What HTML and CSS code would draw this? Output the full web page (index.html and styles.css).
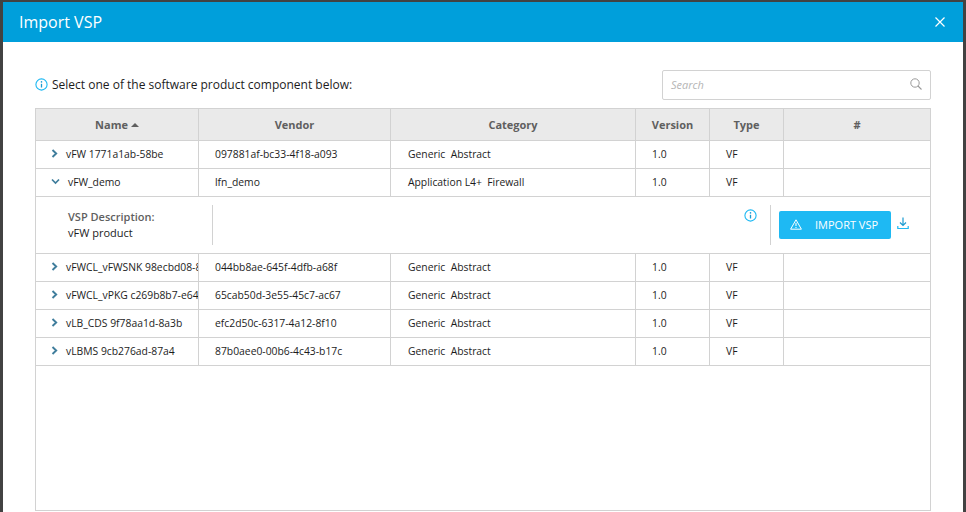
FILE: index.html
```html
<!DOCTYPE html>
<html lang="en">
<head>
    <meta charset="UTF-8">
    <title>Import VSP</title>
    <link rel="stylesheet" href="styles.css">
</head>
<body>
  <div class="modal">
    <div class="modal-header">
      <span class="modal-title">Import VSP</span>
      <svg class="close-icon" width="10" height="10" viewBox="0 0 10 10"><path d="M0.5 0.5L9.5 9.5M9.5 0.5L0.5 9.5" stroke="#fff" stroke-width="1.2" fill="none"/></svg>
    </div>
    <div class="modal-body">
      <div class="toolbar">
        <div class="hint">
          <svg width="13" height="13" viewBox="0 0 13 13"><circle cx="6.5" cy="6.5" r="5.6" stroke="#1eb9f3" stroke-width="1.1" fill="none"/><path d="M6.5 5.8V9.5" stroke="#1b9bd1" stroke-width="1.3"/><circle cx="6.5" cy="3.9" r="0.8" fill="#1b9bd1"/></svg>
          <span>Select one of the software product component below:</span>
        </div>
        <div class="search">
          <span class="search-text">Search</span>
          <svg width="12" height="12" viewBox="0 0 12 12"><circle cx="5" cy="5" r="4.2" stroke="#9a9a9a" stroke-width="1" fill="none"/><path d="M8 8L11.5 11.5" stroke="#9a9a9a" stroke-width="1.1"/></svg>
        </div>
      </div>

      <div class="grid">
        <div class="row head">
          <div class="cell">Name <span class="sort"></span></div>
          <div class="cell">Vendor</div>
          <div class="cell">Category</div>
          <div class="cell">Version</div>
          <div class="cell">Type</div>
          <div class="cell">#</div>
        </div>

        <div class="row">
          <div class="cell name"><svg class="chev" width="7" height="9" viewBox="0 0 7 9"><path d="M1.5 1L5.2 4.5L1.5 8" stroke="#3f7d9c" stroke-width="1.9" fill="none"/></svg><span>vFW 1771a1ab-58be</span></div>
          <div class="cell">097881af-bc33-4f18-a093</div>
          <div class="cell cat">Generic&nbsp; Abstract</div>
          <div class="cell">1.0</div>
          <div class="cell">VF</div>
          <div class="cell"></div>
        </div>

        <div class="row">
          <div class="cell name open"><svg class="chev" width="9" height="7" viewBox="0 0 9 7"><path d="M1 1.5L4.5 5L8 1.5" stroke="#3f7d9c" stroke-width="1.7" fill="none"/></svg><span>vFW_demo</span></div>
          <div class="cell">lfn_demo</div>
          <div class="cell cat">Application L4+&nbsp; Firewall</div>
          <div class="cell">1.0</div>
          <div class="cell">VF</div>
          <div class="cell"></div>
        </div>

        <div class="details">
          <div class="desc">
            <div class="desc-label">VSP Description:</div>
            <div class="desc-value">vFW product</div>
          </div>
          <div class="details-info">
            <svg width="13" height="13" viewBox="0 0 13 13"><circle cx="6.5" cy="6.5" r="5.6" stroke="#1eb9f3" stroke-width="1.1" fill="none"/><path d="M6.5 5.8V9.5" stroke="#1b9bd1" stroke-width="1.3"/><circle cx="6.5" cy="3.9" r="0.8" fill="#1b9bd1"/></svg>
          </div>
          <div class="actions">
            <button class="import-btn" type="button">
              <svg width="12" height="11" viewBox="0 0 12 11"><path d="M6 0.8L11.4 10.2H0.6Z" stroke="#fff" stroke-width="1" fill="none" stroke-linejoin="round"/><path d="M6 3.8V7" stroke="#fff" stroke-width="1.1"/><circle cx="6" cy="8.4" r="0.6" fill="#fff"/></svg>
              <span>IMPORT VSP</span>
            </button>
            <svg class="download" width="12" height="13" viewBox="0 0 12 13"><path d="M6 0.5V8M3 5.5L6 8.5L9 5.5" stroke="#1b9bd1" stroke-width="1.2" fill="none"/><path d="M0.8 9V11.5H11.2V9" stroke="#1eb9f3" stroke-width="1.2" fill="none"/></svg>
          </div>
        </div>

        <div class="row">
          <div class="cell name"><svg class="chev" width="7" height="9" viewBox="0 0 7 9"><path d="M1.5 1L5.2 4.5L1.5 8" stroke="#3f7d9c" stroke-width="1.9" fill="none"/></svg><span>vFWCL_vFWSNK 98ecbd08-8a3c</span></div>
          <div class="cell">044bb8ae-645f-4dfb-a68f</div>
          <div class="cell cat">Generic&nbsp; Abstract</div>
          <div class="cell">1.0</div>
          <div class="cell">VF</div>
          <div class="cell"></div>
        </div>

        <div class="row">
          <div class="cell name"><svg class="chev" width="7" height="9" viewBox="0 0 7 9"><path d="M1.5 1L5.2 4.5L1.5 8" stroke="#3f7d9c" stroke-width="1.9" fill="none"/></svg><span>vFWCL_vPKG c269b8b7-e64a</span></div>
          <div class="cell">65cab50d-3e55-45c7-ac67</div>
          <div class="cell cat">Generic&nbsp; Abstract</div>
          <div class="cell">1.0</div>
          <div class="cell">VF</div>
          <div class="cell"></div>
        </div>

        <div class="row">
          <div class="cell name"><svg class="chev" width="7" height="9" viewBox="0 0 7 9"><path d="M1.5 1L5.2 4.5L1.5 8" stroke="#3f7d9c" stroke-width="1.9" fill="none"/></svg><span>vLB_CDS 9f78aa1d-8a3b</span></div>
          <div class="cell">efc2d50c-6317-4a12-8f10</div>
          <div class="cell cat">Generic&nbsp; Abstract</div>
          <div class="cell">1.0</div>
          <div class="cell">VF</div>
          <div class="cell"></div>
        </div>

        <div class="row">
          <div class="cell name"><svg class="chev" width="7" height="9" viewBox="0 0 7 9"><path d="M1.5 1L5.2 4.5L1.5 8" stroke="#3f7d9c" stroke-width="1.9" fill="none"/></svg><span>vLBMS 9cb276ad-87a4</span></div>
          <div class="cell">87b0aee0-00b6-4c43-b17c</div>
          <div class="cell cat">Generic&nbsp; Abstract</div>
          <div class="cell">1.0</div>
          <div class="cell">VF</div>
          <div class="cell"></div>
        </div>
      </div>
    </div>
  </div>
</body>
</html>
```

FILE: styles.css
```css
* {
  box-sizing: border-box;
}

html, body {
  height: 100%;
}

body {
  margin: 0;
  background: #424242;
  font-family: 'Open Sans', sans-serif;
  color: #1c1c1c;
  overflow: hidden;
}

.modal {
  margin: 2px 3px 0;
  height: 510px;
  background: #fff;
}

.modal-header {
  height: 40px;
  background: #009fdb;
  color: #fff;
  display: flex;
  align-items: center;
  justify-content: space-between;
  padding: 0 18px 0 16px;
}

.modal-title {
  font-size: 16px;
}

.modal-body {
  padding: 28px 32px 0;
}

.toolbar {
  display: flex;
  justify-content: space-between;
  align-items: center;
  height: 30px;
  margin-bottom: 8px;
}

.hint {
  display: flex;
  align-items: center;
  gap: 4px;
  font-size: 12px;
  padding-bottom: 2px;
}

.search {
  width: 269px;
  height: 30px;
  border: 1px solid #d2d2d2;
  border-radius: 2px;
  display: flex;
  align-items: center;
  justify-content: space-between;
  padding: 0 8px 2px 8px;
}

.search-text {
  font-size: 11px;
  font-style: italic;
  color: #b5b5b5;
}

.grid {
  width: 896px;
  height: 403px;
  border: 1px solid #d2d2d2;
}

.row {
  display: grid;
  grid-template-columns: 162px 192px 245px 74px 74px 1fr;
  height: 28px;
  border-bottom: 1px solid #d2d2d2;
  font-size: 10.35px;
}

.cell {
  border-left: 1px solid #d2d2d2;
  padding: 0 0 2px 16px;
  display: flex;
  align-items: center;
  white-space: nowrap;
  overflow: hidden;
}

.cell:first-child {
  border-left: 0;
}

.cat {
  padding-left: 17px;
}

.head {
  height: 32px;
  background: #eaeaea;
  font-size: 11px;
  font-weight: 700;
  color: #5f5f5f;
}

.head .cell {
  justify-content: center;
  padding: 0;
  gap: 3px;
}

.sort {
  width: 0;
  height: 0;
  border-left: 4px solid transparent;
  border-right: 4px solid transparent;
  border-bottom: 4px solid #5f5f5f;
}

.name {
  gap: 8px;
  padding-left: 15px;
}

.open {
  padding-left: 15px;
}

.chev {
  flex: none;
}

.details {
  height: 57px;
  border-bottom: 1px solid #d2d2d2;
  display: flex;
  align-items: flex-start;
  padding-top: 8px;
}

.desc {
  width: 177px;
  height: 40px;
  border-right: 1px solid #d2d2d2;
  padding: 4px 0 0 32px;
  font-size: 11px;
  line-height: 16px;
}

.desc-label {
  font-weight: 600;
  color: #5f5f5f;
}

.details-info {
  margin-left: auto;
  margin-right: 13px;
  padding-top: 4px;
  line-height: 0;
}

.actions {
  height: 40px;
  border-left: 1px solid #d2d2d2;
  padding: 6px 20px 0 8px;
  display: flex;
  align-items: flex-start;
  gap: 6px;
  width: 160px;
}

.import-btn {
  width: 112px;
  height: 28px;
  background: #1eb9f3;
  border: 0;
  border-radius: 2px;
  color: #fff;
  font-family: 'Open Sans', sans-serif;
  font-size: 11px;
  display: flex;
  align-items: center;
  padding: 0 0 2px 11px;
  gap: 13px;
}

.download {
  margin-top: 6px;
}
```
